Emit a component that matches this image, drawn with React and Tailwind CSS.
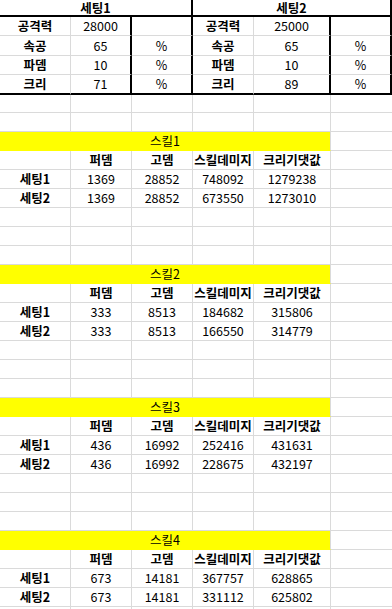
import React from 'react';

const cols = "grid grid-cols-[71px_61px_61px_61px_77px_61px]";

const rightBorder = {
  thin: "border-r border-r-[#dadada]",
  thick: "border-r-2 border-r-black",
  none: "",
};
const bottomBorder = {
  thin: "border-b border-b-[#dadada]",
  thick: "border-b-2 border-b-black",
  yellow: "border-b border-b-[#ffff00]",
  none: "",
};

const Cell = ({ children, r = "thin", b = "thin", bold, className = "" }) => (
  <div
    className={`flex items-center justify-center whitespace-nowrap leading-[14px] ${rightBorder[r]} ${bottomBorder[b]} ${bold ? "font-bold" : ""} ${className}`}
  >
    {children}
  </div>
);

const settings = [
  { name: "세팅1", atk: 28000, speed: 65, pdmg: 10, crit: 71 },
  { name: "세팅2", atk: 25000, speed: 65, pdmg: 10, crit: 89 },
];

const statRows = [
  { label: "공격력", key: "atk", pct: false },
  { label: "속공", key: "speed", pct: true },
  { label: "파뎀", key: "pdmg", pct: true },
  { label: "크리", key: "crit", pct: true },
];
const statHeights = ["h-[19px]", "h-[20px]", "h-[19px]", "h-[20px]"];

const skills = [
  { name: "스킬1", rows: [[1369, 28852, 748092, 1279238], [1369, 28852, 673550, 1273010]] },
  { name: "스킬2", rows: [[333, 8513, 184682, 315806], [333, 8513, 166550, 314779]] },
  { name: "스킬3", rows: [[436, 16992, 252416, 431631], [436, 16992, 228675, 432197]] },
  { name: "스킬4", rows: [[673, 14181, 367757, 628865], [673, 14181, 331112, 625802]] },
];

const EmptyRow = ({ h = "h-[19px]" }) => (
  <div className={`${cols} ${h}`}>
    {[0, 1, 2, 3, 4].map(i => <Cell key={i} />)}
    <Cell r="none" />
  </div>
);

const SkillBlock = ({ skill }) => (
  <>
    <div className={`${cols} h-[19px]`}>
      <Cell className="col-span-5 bg-[#ffff00]" b="yellow">{skill.name}</Cell>
      <Cell r="none" />
    </div>
    <div className={`${cols} h-[19px]`}>
      <Cell />
      <Cell bold>퍼뎀</Cell>
      <Cell bold>고뎀</Cell>
      <Cell bold>스킬데미지</Cell>
      <Cell bold>크리기댓값</Cell>
      <Cell r="none" />
    </div>
    {skill.rows.map((row, i) => (
      <div key={i} className={`${cols} h-[19px]`}>
        <Cell bold>{settings[i].name}</Cell>
        {row.map((v, j) => <Cell key={j}>{v}</Cell>)}
        <Cell r="none" />
      </div>
    ))}
    <EmptyRow />
    <EmptyRow />
    <EmptyRow />
  </>
);

export default function App() {
  return (
    <div className="h-[609px] w-[392px] overflow-hidden bg-white text-black text-[12.5px] font-['Noto_Sans_CJK_KR',sans-serif]">
      {/* stats header */}
      <div className={`${cols} h-[17px]`}>
        <Cell className="col-span-3" r="thick" b="thick" bold>세팅1</Cell>
        <Cell className="col-span-3" r="thick" b="thick" bold>세팅2</Cell>
      </div>
      {statRows.map((s, i) => {
        const b = i === 3 ? "thick" : "thin";
        return (
          <div key={s.key} className={`${cols} ${statHeights[i]}`}>
            <Cell b={b} bold>{s.label}</Cell>
            <Cell b={b} r="thick">{settings[0][s.key]}</Cell>
            <Cell b={b} r="thick">{s.pct ? "%" : ""}</Cell>
            <Cell b={b} bold>{s.label}</Cell>
            <Cell b={b} r="thick">{settings[1][s.key]}</Cell>
            <Cell b={b} r="thick">{s.pct ? "%" : ""}</Cell>
          </div>
        );
      })}
      <EmptyRow h="h-[18px]" />
      <EmptyRow />
      {skills.map(skill => <SkillBlock key={skill.name} skill={skill} />)}
    </div>
  );
}
